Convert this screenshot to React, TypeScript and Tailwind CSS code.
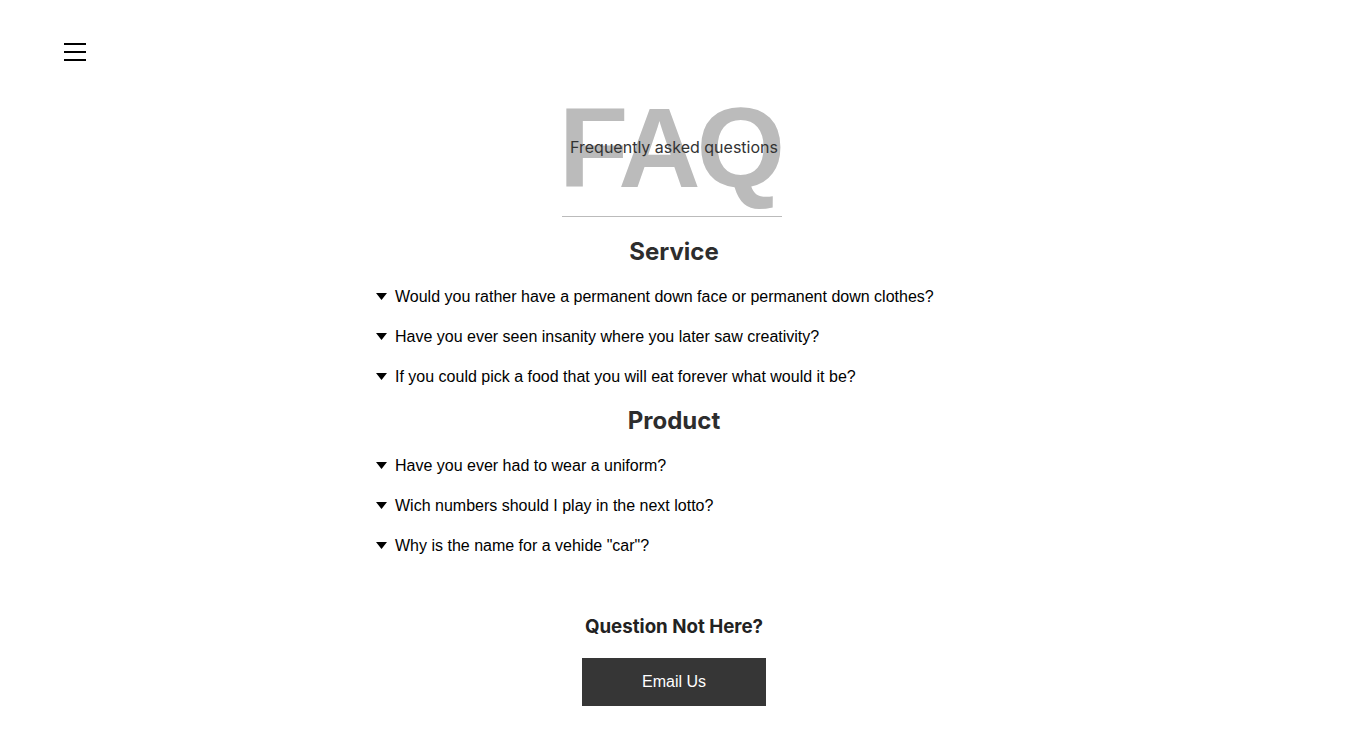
import React from 'react';

const sections = [
  {
    title: 'Service',
    questions: [
      'Would you rather have a permanent down face or permanent down clothes?',
      'Have you ever seen insanity where you later saw creativity?',
      'If you could pick a food that you will eat forever what would it be?',
    ],
  },
  {
    title: 'Product',
    questions: [
      'Have you ever had to wear a uniform?',
      'Wich numbers should I play in the next lotto?',
      'Why is the name for a vehide "car"?',
    ],
  },
];

const Caret = () => (
  <svg width="11" height="7" viewBox="0 0 11 7" className="shrink-0 -mt-px">
    <path d="M0 0 L11 0 L5.5 7 Z" fill="#000" />
  </svg>
);

const QuestionRow = ({ text }: { text: string }) => (
  <div className="flex h-10 items-center gap-2 text-[16px] text-black font-['Liberation_Sans',Arial,sans-serif]">
    <Caret />
    <span>{text}</span>
  </div>
);

export default function App() {
  return (
    <div className="min-h-[746px] w-full bg-white font-['Inter',sans-serif]">
      <div className="px-16 pt-[43px]">
        <button aria-label="menu" className="flex w-[22px] flex-col gap-[6px]">
          <span className="h-[2px] w-full bg-black" />
          <span className="h-[2px] w-full bg-black" />
          <span className="h-[2px] w-full bg-black" />
        </button>
      </div>

      <main className="flex flex-col items-center pr-[18px]">
        <div className="relative mt-[30px] flex h-[114px] items-center justify-center">
          <h1 className="mr-[8px] text-[114px] font-bold leading-none tracking-[-4px] text-[#bbbbbb] font-['Liberation_Sans',Arial,sans-serif]">
            FAQ
          </h1>
          <p className="absolute inset-x-[-20px] top-[44px] whitespace-nowrap text-center text-[16px] text-[#333]">
            Frequently asked questions
          </p>
        </div>
        <div className="mt-[11px] mr-[4px] h-px w-[220px] bg-[#bbbbbb]" />

        <div className="mt-[11px] w-[596px]">
          {sections.map((s) => (
            <section key={s.title}>
              <h2 className="mt-2 mb-[9px] text-center text-[24px] font-bold leading-8 text-[#2d2d2d]">
                {s.title}
              </h2>
              {s.questions.map((q) => (
                <QuestionRow key={q} text={q} />
              ))}
            </section>
          ))}
        </div>

        <h3 className="mt-[47px] text-[18.72px] font-bold leading-7 text-[#222]">Question Not Here?</h3>
        <button className="mt-[17px] h-12 w-[184px] bg-[#363636] text-[16px] text-white font-['Liberation_Sans',Arial,sans-serif]">
          Email Us
        </button>
      </main>
    </div>
  );
}
